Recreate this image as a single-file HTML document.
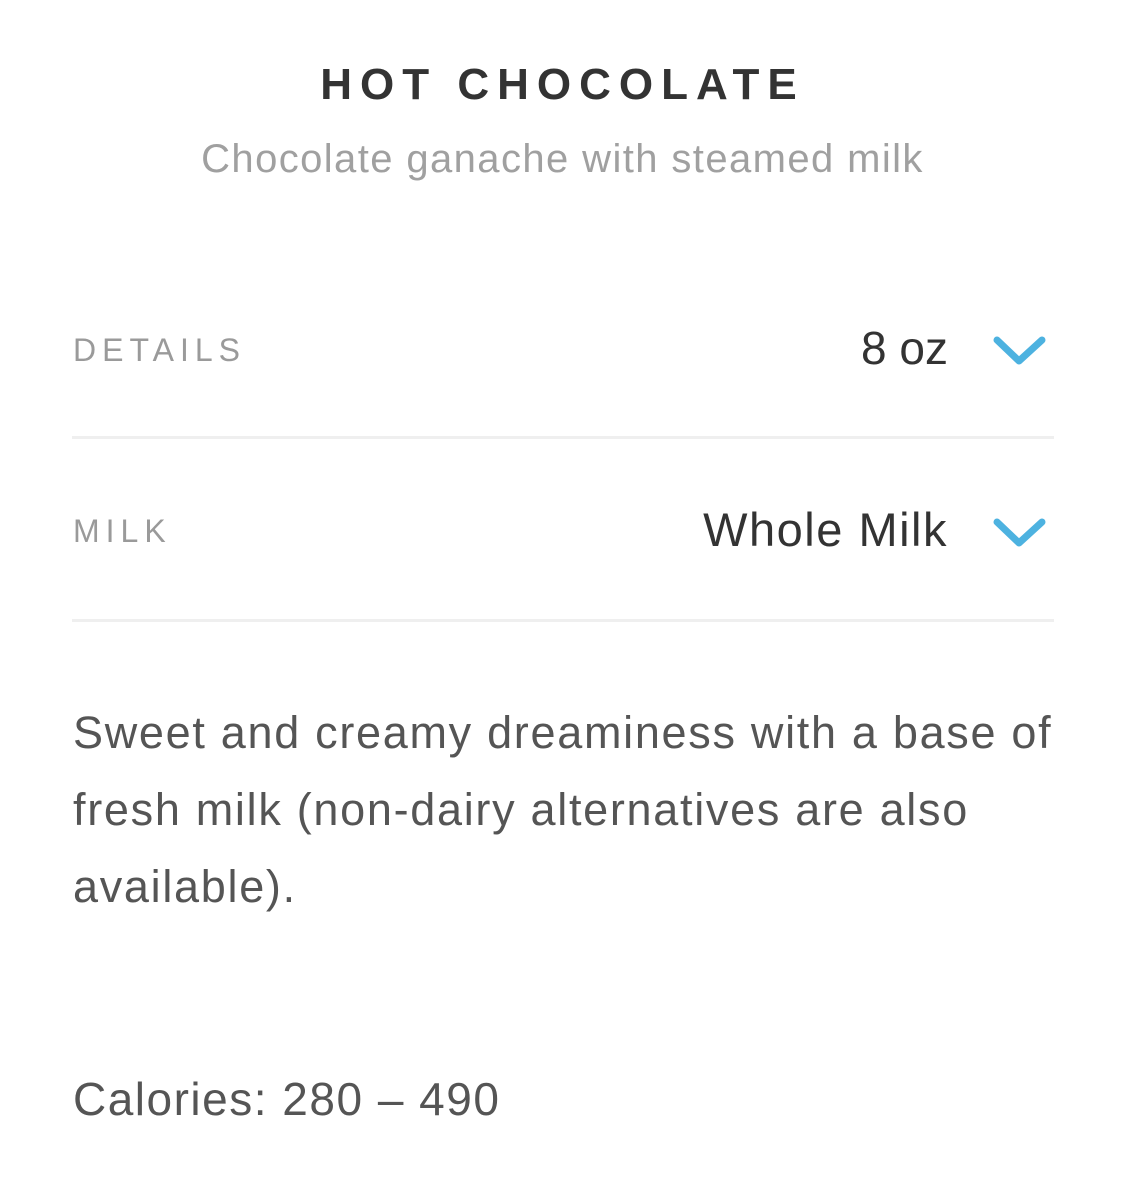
<!DOCTYPE html>
<html><head><style>
body{margin:0;width:1125px;height:1196px;background:#fff;font-family:"Liberation Sans",sans-serif;position:relative;overflow:hidden}
.a{position:absolute;white-space:nowrap}
.t{left:0;width:1125px;text-align:center;top:60px;font-size:44px;font-weight:bold;letter-spacing:8px;color:#333}
.s{left:0;width:1125px;text-align:center;top:137px;font-size:40px;letter-spacing:1.4px;color:#a0a0a0}
.l{left:73px;font-size:32px;letter-spacing:6px;color:#9a9a9a}
.v{right:177px;font-size:46px;color:#333}
.h{position:absolute;left:72px;width:982px;height:3px;background:#efefef}
.b{left:73px;top:694px;font-size:45px;letter-spacing:1.7px;line-height:77px;color:#555;white-space:normal;width:1020px}
</style></head><body>
<div class="a t">HOT CHOCOLATE</div>
<div class="a s">Chocolate ganache with steamed milk</div>
<div class="a l" style="top:332px">DETAILS</div>
<div class="a v" style="top:321px">8 oz</div>
<svg class="a" style="left:990px;top:333px" width="60" height="36"><path d="M7 7 L29 28 L52 7" fill="none" stroke="#4db2e0" stroke-width="7" stroke-linecap="round" stroke-linejoin="round"/></svg>
<div class="h" style="top:436px"></div>
<div class="a l" style="top:513px">MILK</div>
<div class="a v" style="top:502px;font-size:47px;letter-spacing:1.5px">Whole Milk</div>
<svg class="a" style="left:990px;top:515px" width="60" height="36"><path d="M7 7 L29 28 L52 7" fill="none" stroke="#4db2e0" stroke-width="7" stroke-linecap="round" stroke-linejoin="round"/></svg>
<div class="h" style="top:619px"></div>
<div class="a b">Sweet and creamy dreaminess with a base of fresh milk (non-dairy alternatives are also available).</div>
<div class="a" style="left:73px;top:1072px;font-size:46px;letter-spacing:1.5px;color:#555">Calories: 280 – 490</div>
</body></html>
